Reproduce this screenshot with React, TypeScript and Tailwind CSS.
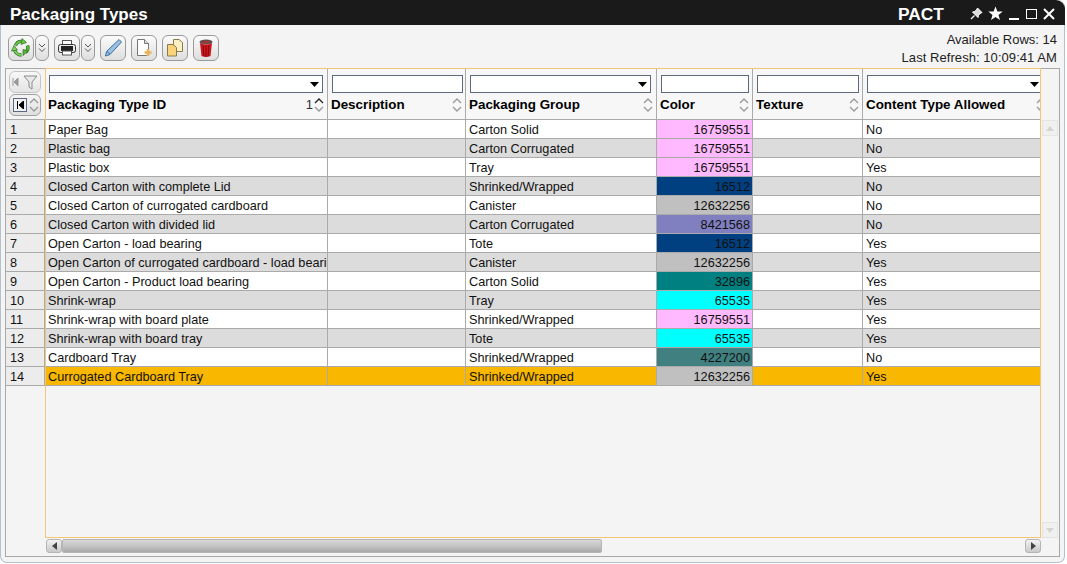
import React from 'react';

type Row = { id: string; group: string; color: string; bg: string; content: string };

const rows: Row[] = [
  { id: 'Paper Bag', group: 'Carton Solid', color: '16759551', bg: 'bg-[#ffbaff]', content: 'No' },
  { id: 'Plastic bag', group: 'Carton Corrugated', color: '16759551', bg: 'bg-[#ffbaff]', content: 'No' },
  { id: 'Plastic box', group: 'Tray', color: '16759551', bg: 'bg-[#ffbaff]', content: 'Yes' },
  { id: 'Closed Carton with complete Lid', group: 'Shrinked/Wrapped', color: '16512', bg: 'bg-[#004080]', content: 'No' },
  { id: 'Closed Carton of currogated cardboard', group: 'Canister', color: '12632256', bg: 'bg-[#c0c0c0]', content: 'No' },
  { id: 'Closed Carton with divided lid', group: 'Carton Corrugated', color: '8421568', bg: 'bg-[#8080c0]', content: 'No' },
  { id: 'Open Carton - load bearing', group: 'Tote', color: '16512', bg: 'bg-[#004080]', content: 'Yes' },
  { id: 'Open Carton of currogated cardboard - load bearing', group: 'Canister', color: '12632256', bg: 'bg-[#c0c0c0]', content: 'Yes' },
  { id: 'Open Carton - Product load bearing', group: 'Carton Solid', color: '32896', bg: 'bg-[#008080]', content: 'Yes' },
  { id: 'Shrink-wrap', group: 'Tray', color: '65535', bg: 'bg-[#00ffff]', content: 'Yes' },
  { id: 'Shrink-wrap with board plate', group: 'Shrinked/Wrapped', color: '16759551', bg: 'bg-[#ffbaff]', content: 'Yes' },
  { id: 'Shrink-wrap with board tray', group: 'Tote', color: '65535', bg: 'bg-[#00ffff]', content: 'Yes' },
  { id: 'Cardboard Tray', group: 'Shrinked/Wrapped', color: '4227200', bg: 'bg-[#408080]', content: 'No' },
  { id: 'Currogated Cardboard Tray', group: 'Shrinked/Wrapped', color: '12632256', bg: 'bg-[#c0c0c0]', content: 'Yes' },
];

const SortArrows = ({ active }: { active?: boolean }) => (
  <svg width="10" height="16" viewBox="0 0 10 16" className="shrink-0">
    <path d="M1 6 L5 2 L9 6" fill="none" stroke={active ? '#222' : '#999'} strokeWidth="1.3" />
    <path d="M1 10 L5 14 L9 10" fill="none" stroke="#999" strokeWidth="1.3" />
  </svg>
);

const ToolBtn = ({ children, className }: { children: React.ReactNode; className: string }) => (
  <div className={`h-[26px] rounded-[6px] border border-[#9a9a9a] bg-gradient-to-b from-[#fbfbfb] to-[#dedede] flex items-center justify-center shrink-0 ${className}`}>
    {children}
  </div>
);

const DoubleChevron = () => (
  <svg width="8" height="10" viewBox="0 0 8 10">
    <path d="M1 1 L4 4 L7 1 M1 5.5 L4 8.5 L7 5.5" fill="none" stroke="#555" strokeWidth="1" />
  </svg>
);

const FilterBox = ({ w, select }: { w: string; select?: boolean }) => (
  <div className={`h-[18px] bg-white border border-[#5c6a80] flex items-center justify-end pr-[3px] ${w}`}>
    {select && (
      <svg width="9" height="5" viewBox="0 0 9 5">
        <path d="M0 0 H9 L4.5 5 Z" fill="#000" />
      </svg>
    )}
  </div>
);

const HeaderCell = ({ label, w, box, select, boxLeft, labelLeft, badge }: { label: string; w: string; box: string; select?: boolean; boxLeft: string; labelLeft: string; badge?: boolean }) => (
  <div className={`${w} shrink-0 h-[51px] border-r border-[#aaaaaa] flex flex-col overflow-hidden`}>
    <div className={`mt-[6px] shrink-0 ${boxLeft}`}>
      <FilterBox w={box} select={select} />
    </div>
    <div className={`flex items-center h-[19px] mt-[2px] ${labelLeft} pr-[3px] font-bold text-[13.4px] text-black whitespace-nowrap`}>
      <span className="flex-1 min-w-0 pt-[2px]">{label}</span>
      {badge && <span className="font-normal text-[13px] text-[#333] mr-px">1</span>}
      <SortArrows active={badge} />
    </div>
  </div>
);

const Cell = ({ w, className, children }: { w: string; className?: string; children?: React.ReactNode }) => (
  <div className={`${w} shrink-0 h-full border-r border-[#aaaaaa] overflow-hidden whitespace-nowrap leading-[20px] ${className ?? 'pl-[3px]'}`}>
    {children}
  </div>
);

const App: React.FC = () => {
  return (
    <div className="w-[1067px] h-[564px] bg-white font-['Liberation_Sans',Arial,sans-serif] text-[12.7px] text-[#111] overflow-hidden">
      <div className="w-[1065px] h-[563px] bg-[#f4f4f4] rounded-t-[7px] rounded-b-[7px] border border-t-0 border-[#b4c0cc] flex flex-col">
        {/* title bar */}
        <div className="h-[25px] -mx-px bg-[#1a1a1a] rounded-tr-[9px] flex items-center pl-[10px] pr-[10px] text-white shrink-0">
          <span className="flex-1 font-bold text-[17px] leading-none pt-[4px]">Packaging Types</span>
          <span className="font-bold text-[17.4px] leading-none mr-[26px] pt-[4px]">PACT</span>
          <div className="flex items-center pt-[2px] h-full">
            <svg width="13" height="13" viewBox="0 0 13 13">
              <path d="M7.5 1 L12 5.5 L10 6.5 L8.5 8.5 L8 10.5 L2.5 5 L4.5 4.5 L6.5 3 Z" fill="#ddd" stroke="#fff" strokeWidth="1" />
              <path d="M4.5 8.5 L1 12" stroke="#fff" strokeWidth="1.3" />
            </svg>
            <svg width="15" height="15" viewBox="0 0 15 15" className="ml-[5px]">
              <path d="M7.5 0.5 L9.4 5.4 L14.7 5.6 L10.5 8.9 L12 14 L7.5 11.1 L3 14 L4.5 8.9 L0.3 5.6 L5.6 5.4 Z" fill="#fff" />
            </svg>
            <div className="w-[10px] h-[2px] bg-white self-end mb-[5px] ml-[6px]" />
            <div className="w-[11px] h-[10px] border-[1.5px] border-white ml-[7px]" />
            <svg width="12" height="12" viewBox="0 0 12 12" className="ml-[6px]">
              <path d="M1 1 L11 11 M11 1 L1 11" stroke="#fff" strokeWidth="2" />
            </svg>
          </div>
        </div>

        {/* toolbar */}
        <div className="h-[43px] shrink-0 flex pl-[7px] pr-[7px]">
          <div className="flex items-start pt-[10px]">
            <ToolBtn className="w-[26px]">
              <svg width="20" height="20" viewBox="0 0 20 20">
                <path d="M4.5 7.5 A6.5 6.5 0 0 1 11.5 3.5" fill="none" stroke="#2e6f24" strokeWidth="3.4" />
                <path d="M4.5 7.5 A6.5 6.5 0 0 1 11.5 3.5" fill="none" stroke="#63c544" strokeWidth="2" />
                <path d="M11 0.5 L15.5 4.5 L10 6.5 Z" fill="#63c544" stroke="#2e6f24" strokeWidth="0.7" />
                <path d="M16.5 7.5 A6.5 6.5 0 0 1 14.5 14.5" fill="none" stroke="#2e6f24" strokeWidth="3.4" />
                <path d="M16.5 7.5 A6.5 6.5 0 0 1 14.5 14.5" fill="none" stroke="#58b83c" strokeWidth="2" />
                <path d="M17 13 L12 17.5 L12 11.5 Z" fill="#58b83c" stroke="#2e6f24" strokeWidth="0.7" />
                <path d="M10.5 17 A7 7 0 0 1 3.5 11.5" fill="none" stroke="#2e6f24" strokeWidth="3.4" />
                <path d="M10.5 17 A7 7 0 0 1 3.5 11.5" fill="none" stroke="#7ad35a" strokeWidth="2" />
                <path d="M0.5 13 L3 7.5 L6.5 12 Z" fill="#7ad35a" stroke="#2e6f24" strokeWidth="0.7" />
              </svg>
            </ToolBtn>
            <ToolBtn className="w-[14px] ml-px"><DoubleChevron /></ToolBtn>
            <ToolBtn className="w-[26px] ml-[5px]">
              <svg width="18" height="16" viewBox="0 0 18 16">
                <rect x="4.5" y="0.5" width="9" height="5" fill="#fff" stroke="#555" />
                <rect x="0.5" y="4.5" width="17" height="8" rx="2" fill="#e8e8e8" stroke="#333" />
                <rect x="3" y="6" width="12" height="5" fill="#222" />
                <rect x="4.5" y="11" width="9" height="4" fill="#fff" stroke="#555" />
              </svg>
            </ToolBtn>
            <ToolBtn className="w-[14px] ml-px"><DoubleChevron /></ToolBtn>
            <ToolBtn className="w-[26px] ml-[5px]">
              <svg width="20" height="20" viewBox="0 0 20 20">
                <path d="M16 1.5 L18.5 4 L7 16.5 L2.5 18 L3.5 13.5 Z" fill="#9cc0e4" stroke="#3f6f9f" strokeWidth="1" />
                <path d="M4 13.5 L7 16" stroke="#3f6f9f" strokeWidth="1" />
              </svg>
            </ToolBtn>
            <ToolBtn className="w-[26px] ml-[5px]">
              <svg width="20" height="20" viewBox="0 0 20 20">
                <path d="M3.5 1.5 H10.5 L14.5 5.5 V17.5 H3.5 Z" fill="#fff" stroke="#777" />
                <path d="M10.5 1.5 V5.5 H14.5" fill="#ddd" stroke="#777" />
                <path d="M14 11 V18 M10.5 14.5 H17.5" stroke="#e8b45a" strokeWidth="2.6" />
              </svg>
            </ToolBtn>
            <ToolBtn className="w-[26px] ml-[5px]">
              <svg width="18" height="18" viewBox="0 0 18 18">
                <path d="M7.5 0.5 H13 L16.5 3.5 V12.5 H7.5 Z" fill="#fdf0c4" stroke="#8a7a4a" />
                <path d="M1.5 5.5 H7 L10.5 8.5 V17 H1.5 Z" fill="#f9d27c" stroke="#8a7a4a" />
              </svg>
            </ToolBtn>
            <ToolBtn className="w-[26px] ml-[5px]">
              <svg width="16" height="20" viewBox="0 0 16 20">
                <ellipse cx="8" cy="4" rx="6.5" ry="2.5" fill="#555" />
                <ellipse cx="8" cy="4" rx="4" ry="1.2" fill="#a33" />
                <path d="M2 5 Q8 8 14 5 L12.5 18 Q8 20 3.5 18 Z" fill="#d0161c" />
                <path d="M5.2 7 L5.8 18 M8 7.5 V19 M10.8 7 L10.2 18" stroke="#7d0b10" strokeWidth="1" />
              </svg>
            </ToolBtn>
          </div>
          <div className="ml-auto text-right text-[13px] text-[#222] pt-[6px] leading-[18px]">
            <div>Available Rows: 14</div>
            <div className="tracking-[0.06px]">Last Refresh: 10:09:41 AM</div>
          </div>
        </div>

        {/* grid */}
        <div className="ml-[4px] w-[1055px] h-[489px] border-x border-b border-[#a8a8a8] flex flex-col">
          <div className="flex h-[470px]">
            {/* row numbers */}
            <div className="w-[39px] shrink-0 border-t border-[#a8a8a8] bg-[#f4f4f4]">
              <div className="h-[51px] bg-[#f4f4f4] pl-[3px] pt-[2px] border-b border-[#aaaaaa]">
                <div className="w-[32px] h-[22px] rounded-[6px] border border-[#c4c4c4] bg-gradient-to-b from-[#f8f8f8] to-[#e4e4e4] flex items-center justify-center gap-[4px]">
                  <svg width="7" height="8" viewBox="0 0 7 8">
                    <path d="M1 0 V8 M6 0 V8 L2 4 Z" fill="#999" stroke="#999" strokeWidth="1" />
                  </svg>
                  <svg width="15" height="15" viewBox="0 0 15 15">
                    <path d="M1 1 H14 L9 7 V14 L6 12 V7 Z" fill="#e9e9e9" stroke="#8b8b8b" />
                  </svg>
                </div>
                <div className="w-[32px] h-[22px] mt-px rounded-[6px] border border-[#a0a0a0] bg-gradient-to-b from-[#f4f4f4] to-[#dfdfdf] flex items-center pl-[3px] gap-[2px]">
                  <div className="w-[14px] h-[14px] border border-[#5c6a80] bg-[#f0f0f0] flex items-center justify-center">
                    <svg width="7" height="8" viewBox="0 0 7 8">
                      <path d="M0.5 0 V8 M6.5 0 V8 L2 4 Z" fill="#000" stroke="#000" strokeWidth="1" />
                    </svg>
                  </div>
                  <SortArrows />
                </div>
              </div>
              {rows.map((_, i) => (
                <div key={i} className="h-[19px] bg-[#ececec] border-b border-r border-[#aaaaaa] pl-[4px] leading-[20px]">
                  {i + 1}
                </div>
              ))}
            </div>

            {/* data panel */}
            <div className="w-[996px] shrink-0 border border-[#f0c674] bg-[#f4f4f4] overflow-hidden">
              <div className="flex h-[51px] border-b border-[#aaaaaa] bg-[#f7f7f7] -mb-px">
                <HeaderCell label="Packaging Type ID" w="w-[282px]" box="w-[274px]" select boxLeft="pl-[3px]" labelLeft="pl-[2px]" badge />
                <HeaderCell label="Description" w="w-[138px]" box="w-[131px]" boxLeft="pl-[4px]" labelLeft="pl-[3px]" />
                <HeaderCell label="Packaging Group" w="w-[191px]" box="w-[181px]" select boxLeft="pl-[4px]" labelLeft="pl-[3px]" />
                <HeaderCell label="Color" w="w-[96px]" box="w-[88px]" boxLeft="pl-[4px]" labelLeft="pl-[3px]" />
                <HeaderCell label="Texture" w="w-[110px]" box="w-[102px]" boxLeft="pl-[4px]" labelLeft="pl-[3px]" />
                <div className="w-[177px] shrink-0 h-[51px] overflow-hidden">
                  <div className="mt-[6px] pl-[4px]">
                    <FilterBox w="w-[176px]" select />
                  </div>
                  <div className="flex items-center h-[19px] mt-[2px] pl-[3px] font-bold text-[13.4px] whitespace-nowrap text-black">
                    <span className="w-[170px] shrink-0 pt-[2px]">Content Type Allowed</span>
                    <SortArrows />
                  </div>
                </div>
              </div>
              <div className="mt-px">
                {rows.map((r, i) => {
                  const stripe = i === 13 ? 'bg-[#f9b700]' : i % 2 === 0 ? 'bg-white' : 'bg-[#dcdcdc]';
                  return (
                    <div key={i} className={`flex h-[19px] border-b border-[#aaaaaa] ${stripe}`}>
                      <Cell w="w-[282px]" className="pl-[2px]">{r.id}</Cell>
                      <Cell w="w-[138px]" />
                      <Cell w="w-[191px]">{r.group}</Cell>
                      <Cell w="w-[96px]" className={`${r.bg} text-right pr-[2px]`}>{r.color}</Cell>
                      <Cell w="w-[110px]" />
                      <div className="w-[177px] shrink-0 pl-[3px] leading-[20px]">{r.content}</div>
                    </div>
                  );
                })}
              </div>
            </div>

            {/* vertical scrollbar */}
            <div className="flex-1 border-t border-[#a8a8a8] pt-[51px] pl-[1px] flex flex-col">
              <div className="w-[16px] h-[16px] border border-[#e4e4e4] bg-[#f0f0f0] flex items-center justify-center">
                <svg width="8" height="5" viewBox="0 0 8 5"><path d="M0 5 L4 0 L8 5 Z" fill="#d4d4d4" /></svg>
              </div>
              <div className="mt-auto w-[16px] h-[16px] border border-[#e4e4e4] bg-[#f0f0f0] flex items-center justify-center">
                <svg width="8" height="5" viewBox="0 0 8 5"><path d="M0 0 L8 0 L4 5 Z" fill="#d4d4d4" /></svg>
              </div>
            </div>
          </div>

          {/* horizontal scrollbar */}
          <div className="flex h-[14px] mt-[1px] pl-[40px]">
            <div className="w-[16px] h-[14px] rounded-[3px] border border-[#b5b5b5] bg-gradient-to-b from-[#f2f2f2] to-[#c9c9c9] flex items-center justify-center">
              <svg width="5" height="8" viewBox="0 0 5 8"><path d="M5 0 V8 L0 4 Z" fill="#444" /></svg>
            </div>
            <div className="w-[540px] h-[14px] rounded-[2px] bg-gradient-to-b from-[#d8d8d8] via-[#c4c4c4] to-[#a9a9a9] border border-[#b5b5b5]" />
            <div className="ml-[423px] w-[16px] h-[14px] rounded-[3px] border border-[#b5b5b5] bg-gradient-to-b from-[#f2f2f2] to-[#c9c9c9] flex items-center justify-center">
              <svg width="5" height="8" viewBox="0 0 5 8"><path d="M0 0 V8 L5 4 Z" fill="#444" /></svg>
            </div>
          </div>
        </div>
      </div>
    </div>
  );
};

export default App;
